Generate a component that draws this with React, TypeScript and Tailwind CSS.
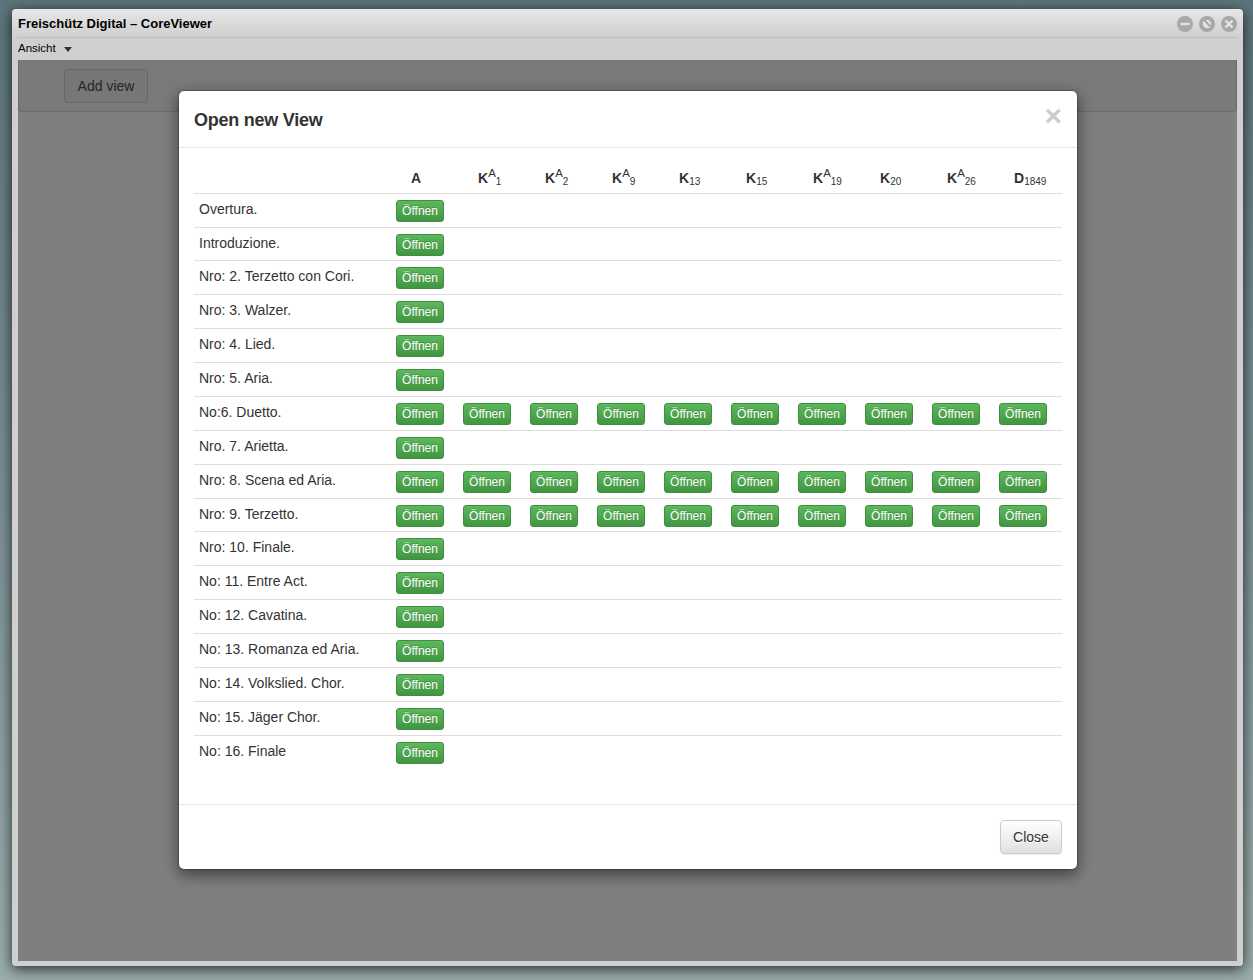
import React from "react";

const sources: [string, string | null, string][] = [
  ["A", null, ""],
  ["K", "A", "1"],
  ["K", "A", "2"],
  ["K", "A", "9"],
  ["K", null, "13"],
  ["K", null, "15"],
  ["K", "A", "19"],
  ["K", null, "20"],
  ["K", "A", "26"],
  ["D", null, "1849"],
];

const rows: [string, boolean][] = [
  ["Overtura.", false],
  ["Introduzione.", false],
  ["Nro: 2. Terzetto con Cori.", false],
  ["Nro: 3. Walzer.", false],
  ["Nro: 4. Lied.", false],
  ["Nro: 5. Aria.", false],
  ["No:6. Duetto.", true],
  ["Nro. 7. Arietta.", false],
  ["Nro: 8. Scena ed Aria.", true],
  ["Nro: 9. Terzetto.", true],
  ["Nro: 10. Finale.", false],
  ["No: 11. Entre Act.", false],
  ["No: 12. Cavatina.", false],
  ["No: 13. Romanza ed Aria.", false],
  ["No: 14. Volkslied. Chor.", false],
  ["No: 15. Jäger Chor.", false],
  ["No: 16. Finale", false],
];

function OpenButton() {
  return (
    <button className="block w-12 h-[22px] mt-px rounded-[3px] border border-[#3e8f3e] bg-gradient-to-b from-[#5cb85c] to-[#419641] text-white text-xs leading-[20px] text-center [text-shadow:0_-1px_0_rgba(0,0,0,0.2)]">
      Öffnen
    </button>
  );
}

function WindowButton({ kind }: { kind: "min" | "max" | "close" }) {
  return (
    <svg width="16" height="16" viewBox="0 0 16 16">
      <circle cx="8" cy="8" r="8" fill="#a8a8a8" />
      {kind === "min" && <rect x="3.5" y="6.8" width="9" height="2.4" fill="#e4e4e4" />}
      {kind === "max" && (
        <>
          <path d="M4 4 L9.5 4 L12 6.5 L12 12 L6.5 12 L4 9.5 Z" fill="#e4e4e4" />
          <path d="M4.2 3.2 L12.8 11.8" stroke="#a8a8a8" strokeWidth="2.2" />
        </>
      )}
      {kind === "close" && (
        <path d="M4.5 4.5 L11.5 11.5 M11.5 4.5 L4.5 11.5" stroke="#e4e4e4" strokeWidth="2.4" />
      )}
    </svg>
  );
}

export default function App() {
  return (
    <div className="h-[980px] pt-[9px] pl-3 pr-[10px] bg-gradient-to-b from-[#5d747c] to-[#9aacac] overflow-hidden font-['Liberation_Sans',Arial,sans-serif]">
      <div className="h-[957px] flex flex-col rounded-[4px] bg-gradient-to-b from-[#e6e6e6] from-0% to-[#cfcfcf] to-[3%] shadow-[0_3px_14px_rgba(0,0,0,0.75)] overflow-hidden">
        <div className="h-[29px] shrink-0 mx-[6px] pt-px flex items-center justify-between border-b border-[#bdbdbd]">
          <span className="text-[13px] font-bold text-black leading-none">Freischütz Digital – CoreViewer</span>
          <div className="flex gap-[6px]">
            <WindowButton kind="min" />
            <WindowButton kind="max" />
            <WindowButton kind="close" />
          </div>
        </div>
        <div className="h-[22px] shrink-0 pl-[6px] flex items-center text-[11.5px] text-black">
          <span>Ansicht</span>
          <span className="ml-2 w-0 h-0 border-x-[4.5px] border-x-transparent border-t-[5px] border-t-[#333]" />
        </div>
        <div className="relative flex-1 mx-[6px] mb-[5px] bg-white overflow-hidden">
          <div className="h-[52px] pt-[9px] pl-[45px] bg-[#f5f5f5] border-x border-b border-[#d6d6d6] rounded-b-[4px]">
            <button className="w-[84px] h-[34px] rounded-[4px] border border-[#cccccc] bg-[#eeeeee] text-sm text-[#4c4c4c]">
              Add view
            </button>
          </div>
          <div className="absolute inset-0 bg-black/50 pl-40 pt-[30px]">
            <div className="w-[900px] h-[780px] rounded-[6px] border border-black/20 bg-white bg-clip-padding shadow-[0_5px_15px_rgba(0,0,0,0.5)] text-[#333] text-sm flex flex-col">
              <div className="h-[57px] shrink-0 px-[15px] flex items-center justify-between border-b border-[#e5e5e5]">
                <h4 className="text-lg font-bold leading-[26px] mt-px tracking-[-0.25px]">Open new View</h4>
                <span className="text-[30px] font-bold leading-none text-[#cccccc] -mt-[6px]">×</span>
              </div>
              <div className="flex-1 px-[15px] pt-[15px]">
                <table className="w-[868px] table-fixed border-separate border-spacing-0">
                  <colgroup>
                    <col className="w-[197px]" />
                    {sources.map((_, i) => (
                      <col key={i} className={i === 9 ? "w-[68px]" : "w-[67px]"} />
                    ))}
                  </colgroup>
                  <thead>
                    <tr>
                      <th className="h-[29.65px]" />
                      {sources.map(([l, s, n], i) => (
                        <th key={i} className="h-[29.65px] pl-5 pb-[5px] align-bottom text-left text-sm font-bold leading-5 whitespace-nowrap">
                          {l}
                          {s && <sup className="font-normal text-[11.5px]">{s}</sup>}
                          {n && <sub className="font-normal text-[10px]">{n}</sub>}
                        </th>
                      ))}
                    </tr>
                  </thead>
                  <tbody>
                    {rows.map(([name, all]) => (
                      <tr key={name}>
                        <td className="h-[33.89px] border-t border-[#dddddd] pl-[5px] pt-[5px] align-top leading-5">{name}</td>
                        {sources.map((_, i) => (
                          <td key={i} className="h-[33.89px] border-t border-[#dddddd] pl-[5px] pt-[5px] align-top">
                            {(i === 0 || all) && <OpenButton />}
                          </td>
                        ))}
                      </tr>
                    ))}
                  </tbody>
                </table>
              </div>
              <div className="h-[65px] shrink-0 border-t border-[#e5e5e5] px-[15px] pt-[15px] flex justify-end">
                <button className="w-[62px] h-[34px] rounded-[4px] border border-[#cccccc] bg-gradient-to-b from-white to-[#e0e0e0] text-sm text-[#333] shadow-[0_1px_1px_rgba(0,0,0,0.075)] [text-shadow:0_1px_0_#fff]">
                  Close
                </button>
              </div>
            </div>
          </div>
        </div>
      </div>
    </div>
  );
}
